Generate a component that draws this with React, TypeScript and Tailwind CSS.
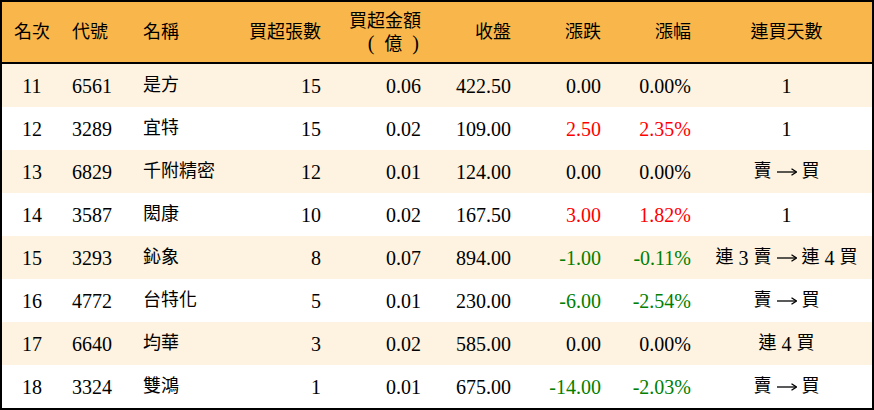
import React from 'react';

type Row = {
  rank: number;
  code: string;
  name: string;
  lots: number;
  amount: string;
  close: string;
  change: string;
  pct: string;
  days: string;
};

const rows: Row[] = [
  { rank: 11, code: '6561', name: '是方', lots: 15, amount: '0.06', close: '422.50', change: '0.00', pct: '0.00%', days: '1' },
  { rank: 12, code: '3289', name: '宜特', lots: 15, amount: '0.02', close: '109.00', change: '2.50', pct: '2.35%', days: '1' },
  { rank: 13, code: '6829', name: '千附精密', lots: 12, amount: '0.01', close: '124.00', change: '0.00', pct: '0.00%', days: '賣 → 買' },
  { rank: 14, code: '3587', name: '閎康', lots: 10, amount: '0.02', close: '167.50', change: '3.00', pct: '1.82%', days: '1' },
  { rank: 15, code: '3293', name: '鈊象', lots: 8, amount: '0.07', close: '894.00', change: '-1.00', pct: '-0.11%', days: '連 3 賣 → 連 4 買' },
  { rank: 16, code: '4772', name: '台特化', lots: 5, amount: '0.01', close: '230.00', change: '-6.00', pct: '-2.54%', days: '賣 → 買' },
  { rank: 17, code: '6640', name: '均華', lots: 3, amount: '0.02', close: '585.00', change: '0.00', pct: '0.00%', days: '連 4 買' },
  { rank: 18, code: '3324', name: '雙鴻', lots: 1, amount: '0.01', close: '675.00', change: '-14.00', pct: '-2.03%', days: '賣 → 買' },
];

const cols = 'grid grid-cols-[60px_71px_108px_90px_100px_90px_90px_90px_1fr] items-center';

// 漲跌顏色
const tone = (v: string) => {
  if (v.startsWith('-')) return 'text-[#008000]';
  if (parseFloat(v) > 0) return 'text-[#ff0000]';
  return 'text-black';
};

const Arrow = () => (
  <svg width="20" height="10" viewBox="0 0 20 10" className="block">
    <line x1="0" y1="5" x2="19" y2="5" stroke="black" strokeWidth="1.3" />
    <path d="M14.5 1.8 L19.5 5 L14.5 8.2" fill="none" stroke="black" strokeWidth="1.3" />
  </svg>
);

const Days = ({ text }: { text: string }) => (
  <div className="flex items-center justify-center gap-[5px] whitespace-nowrap">
    {text.split(' ').map((t, i) =>
      t === '→' ? (
        <Arrow key={i} />
      ) : /\d/.test(t) ? (
        <span key={i} className="text-[20px]">{t}</span>
      ) : (
        <span key={i} className="text-[18px]">{t}</span>
      )
    )}
  </div>
);

const App: React.FC = () => {
  return (
    <div
      className="w-[874px] h-[410px] border-2 border-black bg-white text-black text-[20px]"
      style={{ fontFamily: '"Liberation Serif", "Noto Sans CJK TC", serif' }}
    >
      <div className={`${cols} h-[62px] bg-[#f9b74b] border-b-2 border-black text-[18px]`}>
        <div className="text-center">名次</div>
        <div className="pl-[10px]">代號</div>
        <div className="pl-[10px]">名稱</div>
        <div className="text-right pr-[10px]">買超張數</div>
        <div className="text-right pr-[10px] leading-[22px]">
          <div>買超金額</div>
          <div className="pr-[2px] text-[20px]">
            (<span className="mx-[10px] text-[18px]">億</span>)
          </div>
        </div>
        <div className="text-right pr-[10px]">收盤</div>
        <div className="text-right pr-[10px]">漲跌</div>
        <div className="text-right pr-[10px]">漲幅</div>
        <div className="text-center">連買天數</div>
      </div>

      {rows.map((r, i) => (
        <div
          key={r.code}
          className={`${cols} h-[43px] ${i % 2 === 0 ? 'bg-[#fdf3e0]' : 'bg-white'}`}
        >
          <div className="text-center">{r.rank}</div>
          <div className="pl-[10px]">{r.code}</div>
          <div className="pl-[10px] text-[18px]">{r.name}</div>
          <div className="text-right pr-[10px]">{r.lots}</div>
          <div className="text-right pr-[10px]">{r.amount}</div>
          <div className="text-right pr-[10px]">{r.close}</div>
          <div className={`text-right pr-[10px] ${tone(r.change)}`}>{r.change}</div>
          <div className={`text-right pr-[10px] ${tone(r.pct)}`}>{r.pct}</div>
          <Days text={r.days} />
        </div>
      ))}
    </div>
  );
};

export default App;
